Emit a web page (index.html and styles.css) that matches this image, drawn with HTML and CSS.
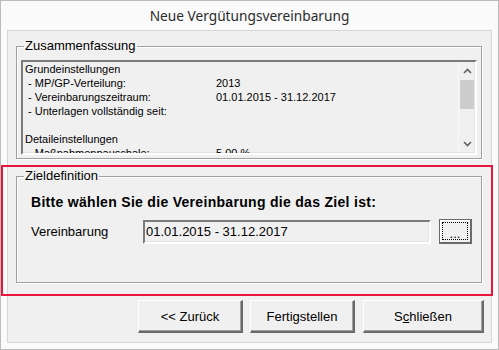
FILE: index.html
```html
<!DOCTYPE html>
<html lang="de">
  <head>
    <meta charset="UTF-8" />
    <title>Neue Vergütungsvereinbarung</title>
    <link rel="stylesheet" href="styles.css">
  </head>
  <body>
    <div class="window">
      <div class="title">Neue Vergütungsvereinbarung</div>
      <div class="panel">
        <fieldset class="group summary">
          <legend>Zusammenfassung</legend>
          <div class="listbox">
            <div class="list-lines">
              <div class="row head">Grundeinstellungen</div>
              <div class="row"><span class="key">- MP/GP-Verteilung:</span><span>2013</span></div>
              <div class="row"><span class="key">- Vereinbarungszeitraum:</span><span>01.01.2015 - 31.12.2017</span></div>
              <div class="row"><span class="key">- Unterlagen vollständig seit:</span><span></span></div>
              <div class="row"></div>
              <div class="row head">Detaileinstellungen</div>
              <div class="row"><span class="key">- Maßnahmenpauschale:</span><span>5,00 %</span></div>
            </div>
            <div class="scrollbar">
              <div class="arrow">
                <svg width="9" height="6" viewBox="0 0 9 6"><path d="M1 5 L4.5 1.5 L8 5" fill="none" stroke="#606060" stroke-width="1.6"/></svg>
              </div>
              <div class="track"><div class="thumb"></div></div>
              <div class="arrow">
                <svg width="9" height="6" viewBox="0 0 9 6"><path d="M1 1 L4.5 4.5 L8 1" fill="none" stroke="#606060" stroke-width="1.6"/></svg>
              </div>
            </div>
          </div>
        </fieldset>

        <div class="highlight">
          <fieldset class="group target">
            <legend>Zieldefinition</legend>
            <div class="target-body">
              <div class="prompt">Bitte wählen Sie die Vereinbarung die das Ziel ist:</div>
              <div class="field-row">
                <span class="field-label">Vereinbarung</span>
                <div class="textbox">01.01.2015 - 31.12.2017</div>
                <button class="browse"><span class="focus">...</span></button>
              </div>
            </div>
          </fieldset>
        </div>

        <div class="actions">
          <button class="btn back">&lt;&lt; Zurück</button>
          <button class="btn finish">Fertigstellen</button>
          <button class="btn close">S<u>c</u>hließen</button>
        </div>
      </div>
    </div>
  </body>
</html>
```

FILE: styles.css
```css
* {
  margin: 0;
  padding: 0;
  box-sizing: border-box;
}
body {
  background-color: #fafafa;
  font-family: "Liberation Sans", Arial, sans-serif;
  font-size: 13px;
  color: #000;
}
.window {
  width: 499px;
  height: 350px;
  border: 1px solid #bcbcbc;
  background-color: #fafafa;
}
.title {
  height: 29px;
  line-height: 29px;
  text-align: center;
  font-family: "Noto Sans", sans-serif;
  font-size: 13.7px;
  color: #2b2b2b;
}
.panel {
  margin: 0 6px;
  height: 313px;
  border: 1px solid #d6d6d6;
  background-color: #f0f0f0;
}
.group {
  border: 1px solid #a0a0a0;
  box-shadow: 1px 1px 0 #fff, inset 1px 1px 0 #fff;
}
.group legend {
  margin-left: 3px;
  padding: 0 1px;
  line-height: 14px;
  font-size: 13px;
}
.summary {
  margin: 8px 9px 0 8px;
  padding: 7px 4px 3px 4px;
}
.listbox {
  display: flex;
  height: 95px;
  border-style: solid;
  border-width: 2px;
  border-color: #7a7a7a #fff #fff #7a7a7a;
  box-shadow: inset -1px -1px 0 #e3e3e3;
  background-color: #f0f0f0;
}
.list-lines {
  flex: 1;
  overflow: hidden;
  padding-left: 2px;
  font-size: 11px;
}
.row {
  display: flex;
  height: 14px;
  line-height: 14px;
  white-space: nowrap;
}
.row .key {
  width: 191px;
  padding-left: 3px;
}
.scrollbar {
  width: 17px;
  display: flex;
  flex-direction: column;
  border-left: 1px solid #f8f8f8;
  margin-bottom: 1px;
}
.arrow {
  height: 17px;
  display: flex;
  align-items: center;
  justify-content: center;
}
.track {
  flex: 1;
  padding: 1px 0 0 0;
}
.thumb {
  height: 29px;
  margin: 0 1px;
  background-color: #cdcdcd;
}
.highlight {
  margin: 6px -2px 0 -7px;
  border: 2px solid #e8163c;
  padding: 2px 9px 11px 13px;
}
.target {
  padding: 12px 8px 0 4px;
  height: 114px;
}
.target-body {
  padding-left: 10px;
}
.prompt {
  font-weight: bold;
  font-size: 14px;
  letter-spacing: 0.3px;
  line-height: 15px;
}
.field-row {
  display: flex;
  align-items: center;
  margin-top: 9px;
}
.field-label {
  width: 112px;
}
.textbox {
  width: 288px;
  height: 24px;
  line-height: 20px;
  padding-left: 1px;
  border-style: solid;
  border-width: 2px;
  border-color: #7a7a7a #fff #fff #7a7a7a;
  box-shadow: inset -1px -1px 0 #e3e3e3;
}
.browse {
  margin-left: 8px;
  width: 33px;
  height: 25px;
  border: 1px solid #6a6a6a;
  border-right-width: 2px;
  border-bottom-width: 2px;
  background-color: #f0f0f0;
  box-shadow: inset 1px 1px 0 #fff;
  font-family: inherit;
  font-size: 13px;
  padding: 2px;
}
.browse .focus {
  display: block;
  height: 100%;
  border: 1px dotted #000;
  line-height: 22px;
}
.actions {
  display: flex;
  justify-content: flex-end;
  gap: 7px;
  margin-top: 4px;
  padding-right: 7px;
}
.btn {
  height: 33px;
  width: 105px;
  border-style: solid;
  border-width: 1px 2px 2px 1px;
  border-color: #fff #6a6a6a #6a6a6a #fff;
  box-shadow: inset -1px -1px 0 #a0a0a0;
  background-color: #f0f0f0;
  font-family: inherit;
  font-size: 13px;
  color: #000;
}
.btn.close {
  width: 121px;
  margin-left: 1px;
}
```
